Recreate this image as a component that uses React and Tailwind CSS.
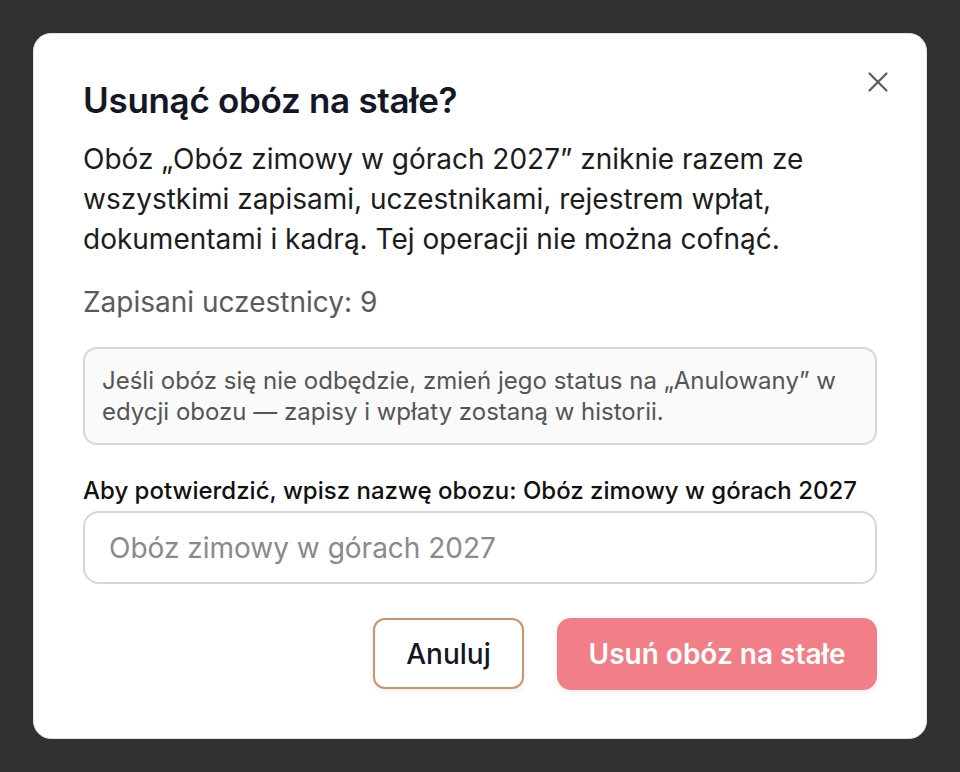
import { useState } from 'react';

const camp = {
  name: 'Obóz zimowy w górach 2027',
  participants: 9,
};

function CloseIcon() {
  return (
    <svg width="22" height="22" viewBox="0 0 22 22" fill="none" stroke="currentColor" strokeWidth="2.2" strokeLinecap="round">
      <path d="M2.5 2.5l17 17M19.5 2.5l-17 17" />
    </svg>
  );
}

export default function App() {
  const [confirmText, setConfirmText] = useState('');
  const canDelete = confirmText.trim() === camp.name;

  return (
    <div
      className="min-h-[772px] bg-[#313131] pt-[33px] px-[33px]"
      style={{ fontFamily: 'Inter, "Noto Sans", sans-serif' }}
    >
      <div className="relative w-[894px] rounded-[18px] border border-[#e3e3e3] bg-white px-[49px] pt-[46px] pb-[48px]">
        <button className="absolute right-[37px] top-[37px] text-[#575b66]">
          <CloseIcon />
        </button>

        <h2 className="text-[35px] leading-[40px] font-semibold text-[#141826] tracking-[-0.3px]">
          Usunąć obóz na stałe?
        </h2>
        <p className="mt-[19px] text-[28px] leading-[40px] text-[#1c1c1c]">
          Obóz „{camp.name}” zniknie razem ze wszystkimi zapisami, uczestnikami,
          rejestrem wpłat, dokumentami i kadrą. Tej operacji nie można cofnąć.
        </p>
        <p className="mt-[25px] text-[28px] leading-[36px] text-[#5a5a5a]">
          Zapisani uczestnicy: {camp.participants}
        </p>

        <div className="mt-[27px] rounded-[14px] border-2 border-[#d6d6d6] bg-[#fafafa] px-[17px] py-4 text-[24px] leading-[31px] text-[#555555]">
          Jeśli obóz się nie odbędzie, zmień jego status na „Anulowany” w edycji
          obozu — zapisy i wpłaty zostaną w historii.
        </div>

        <label className="mt-[30px] block text-[24px] leading-[32px] font-medium text-[#111111]">
          Aby potwierdzić, wpisz nazwę obozu: {camp.name}
        </label>
        <input
          className="mt-[4px] h-[73px] w-full rounded-[16px] border-2 border-[#d6d6d6] bg-white px-[24px] text-[28px] text-[#1c1c1c] placeholder:text-[#8a8a8a] outline-none"
          placeholder={camp.name}
          value={confirmText}
          onChange={(e) => setConfirmText(e.target.value)}
        />

        <div className="mt-[34px] flex justify-end gap-[33px]">
          <button className="h-[71px] w-[151px] rounded-[12px] border-2 border-[#c79670] bg-white text-[28px] font-medium text-[#141826] shadow-[0_2px_6px_rgba(0,0,0,0.08)]">
            Anuluj
          </button>
          <button
            disabled={!canDelete}
            className={
              canDelete
                ? 'h-[72px] w-[320px] rounded-[14px] bg-[#e5404d] text-[28px] font-semibold text-white shadow-[0_2px_6px_rgba(0,0,0,0.08)]'
                : 'h-[72px] w-[320px] rounded-[14px] bg-[#f27e87] text-[28px] font-semibold text-white shadow-[0_2px_6px_rgba(0,0,0,0.08)]'
            }
          >
            Usuń obóz na stałe
          </button>
        </div>
      </div>
    </div>
  );
}
